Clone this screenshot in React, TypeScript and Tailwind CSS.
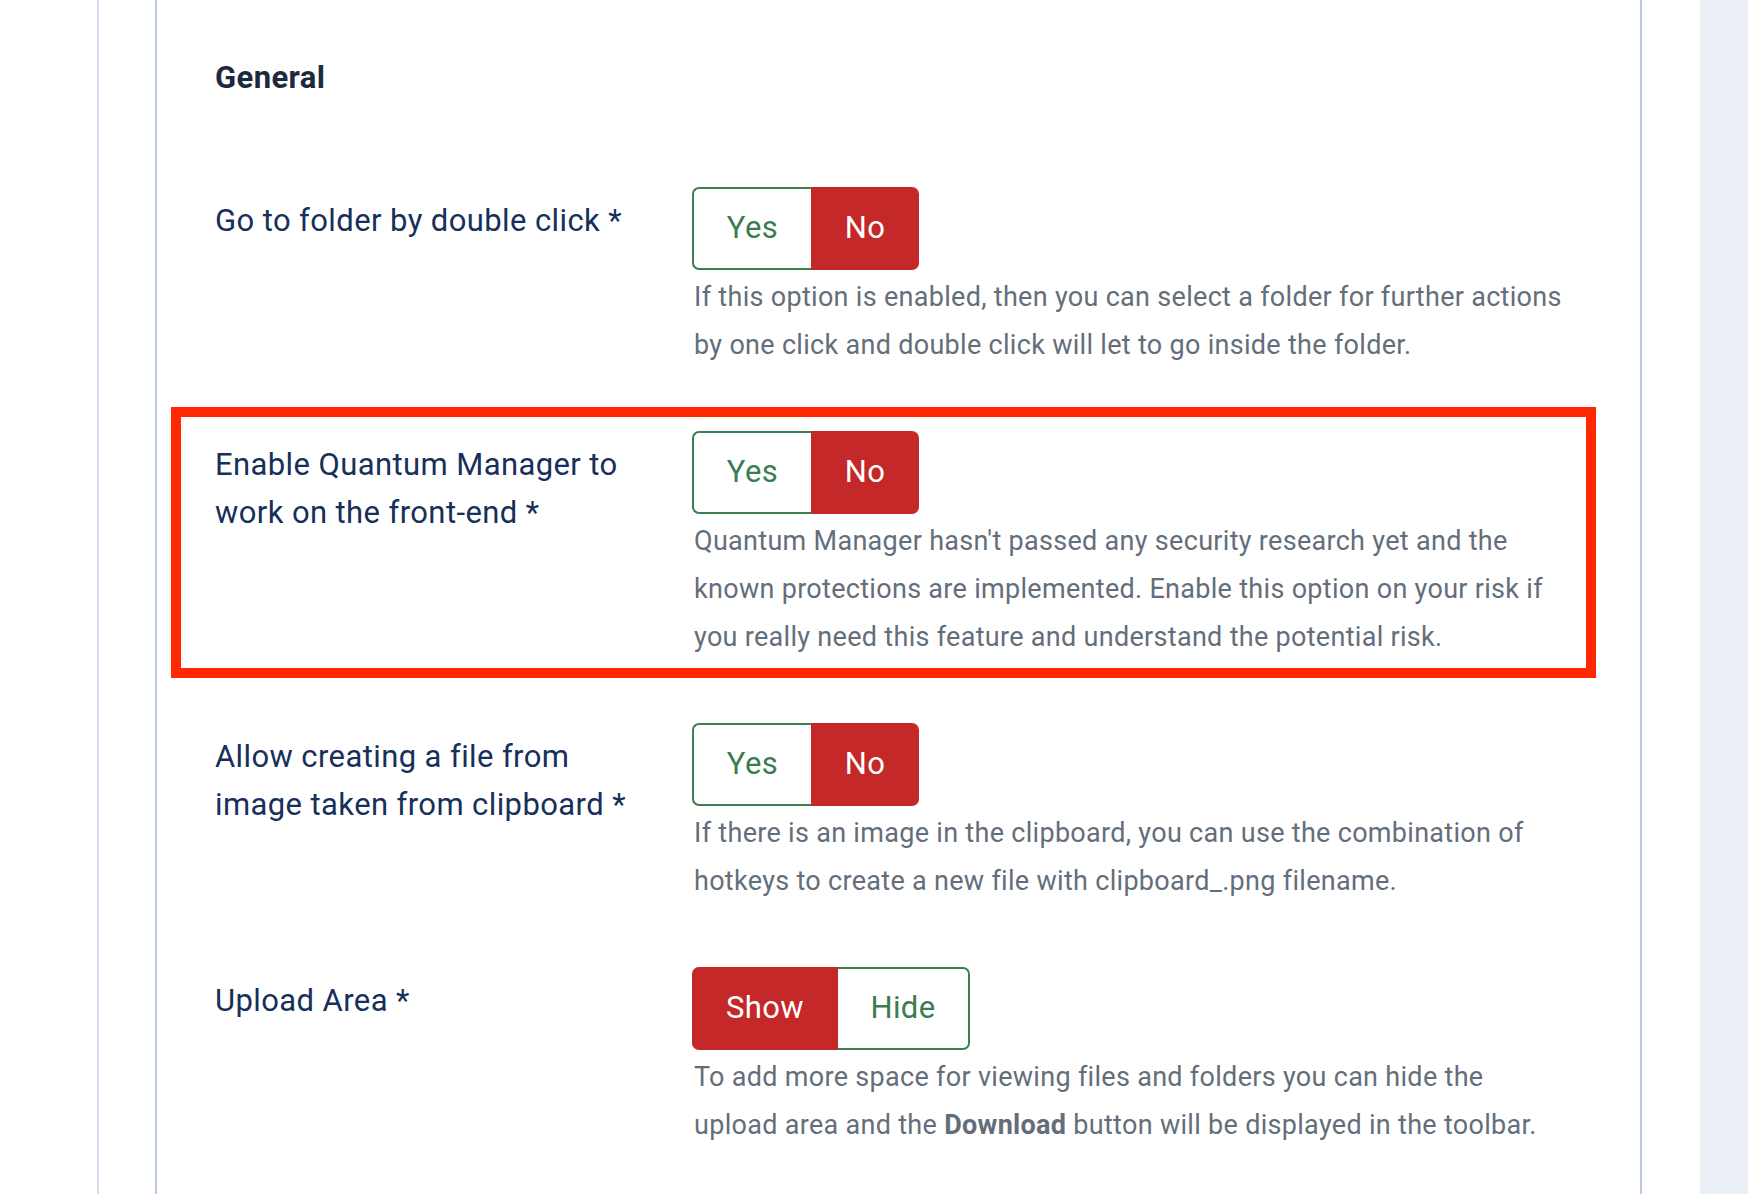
import React from "react";

type Option = { label: string; active: boolean };

interface SettingRowProps {
    label: React.ReactNode;
    options: Option[];
    description: React.ReactNode;
    highlighted?: boolean;
}

function Toggle({ options }: { options: Option[] }) {
    return (
        <div className="flex h-[83px]">
            {options.map((opt, i) => {
                const first = i === 0;
                const last = i === options.length - 1;
                const widthCls = opt.label === "Yes" ? "w-[119px]" : opt.label === "No" ? "w-[108px]" : opt.label === "Show" ? "w-[146px]" : "w-[132px]";
                return (
                    <div
                        key={opt.label}
                        className={[
                            "flex items-center justify-center text-[31px] tracking-[0.4px]",
                            widthCls,
                            first ? "rounded-l-[7px]" : "",
                            last ? "rounded-r-[7px]" : "",
                            opt.active
                                ? "bg-[#c42828] text-white"
                                : [
                                      "bg-white text-[#3a7d50] border-y-2 border-[#3d7e52]",
                                      first ? "border-l-2" : "",
                                      last ? "border-r-2" : "",
                                  ].join(" "),
                        ].join(" ")}
                    >
                        {opt.label}
                    </div>
                );
            })}
        </div>
    );
}

function SettingRow({ label, options, description, highlighted }: SettingRowProps) {
    return (
        <div className="relative flex mb-[62px]">
            {highlighted && (
                <div className="absolute left-[-44px] top-[-24px] w-[1425px] h-[271px] border-[10px] border-[#ff2800] pointer-events-none" />
            )}
            <div className="w-[477px] shrink-0 pt-[10px] pr-[52px] text-[31px] tracking-[0.4px] leading-[48px] text-[#16305a]">
                {label}
            </div>
            <div className="flex-1 pr-[74px]">
                <Toggle options={options} />
                <p className="mt-[3px] pl-[2px] text-[27px] tracking-[0.3px] leading-[48px] text-[#646e7b]">{description}</p>
            </div>
        </div>
    );
}

const yesNo: Option[] = [
    { label: "Yes", active: false },
    { label: "No", active: true },
];

export default function App() {
    return (
        <div
            className="flex h-[1194px] w-full overflow-hidden bg-white"
            style={{ fontFamily: "Roboto, 'Noto Sans', sans-serif" }}
        >
            <div className="flex w-[1700px] shrink-0">
                <div className="w-[97px] shrink-0" />
                <div className="flex-1 border-l-2 border-[#d3ddee] pl-[56px]">
                    <div className="h-full w-[1487px] border-x-2 border-[#bccbe3] pl-[58px] pt-[54px]">
                        <h2 className="text-[31px] tracking-[0.4px] font-bold leading-[48px] text-[#1d2a3e] mb-[85px]">General</h2>

                        <SettingRow
                            label="Go to folder by double click *"
                            options={yesNo}
                            description="If this option is enabled, then you can select a folder for further actions by one click and double click will let to go inside the folder."
                        />
                        <SettingRow
                            highlighted
                            label="Enable Quantum Manager to work on the front-end *"
                            options={yesNo}
                            description="Quantum Manager hasn't passed any security research yet and the known protections are implemented. Enable this option on your risk if you really need this feature and understand the potential risk."
                        />
                        <SettingRow
                            label="Allow creating a file from image taken from clipboard *"
                            options={yesNo}
                            description="If there is an image in the clipboard, you can use the combination of hotkeys to create a new file with clipboard_.png filename."
                        />
                        <SettingRow
                            label="Upload Area *"
                            options={[
                                { label: "Show", active: true },
                                { label: "Hide", active: false },
                            ]}
                            description={
                                <>
                                    To add more space for viewing files and folders you can hide the upload area and the{" "}
                                    <b className="font-bold">Download</b> button will be displayed in the toolbar.
                                </>
                            }
                        />
                    </div>
                </div>
            </div>
            <div className="flex-1 bg-[#eaeff5]" />
        </div>
    );
}
